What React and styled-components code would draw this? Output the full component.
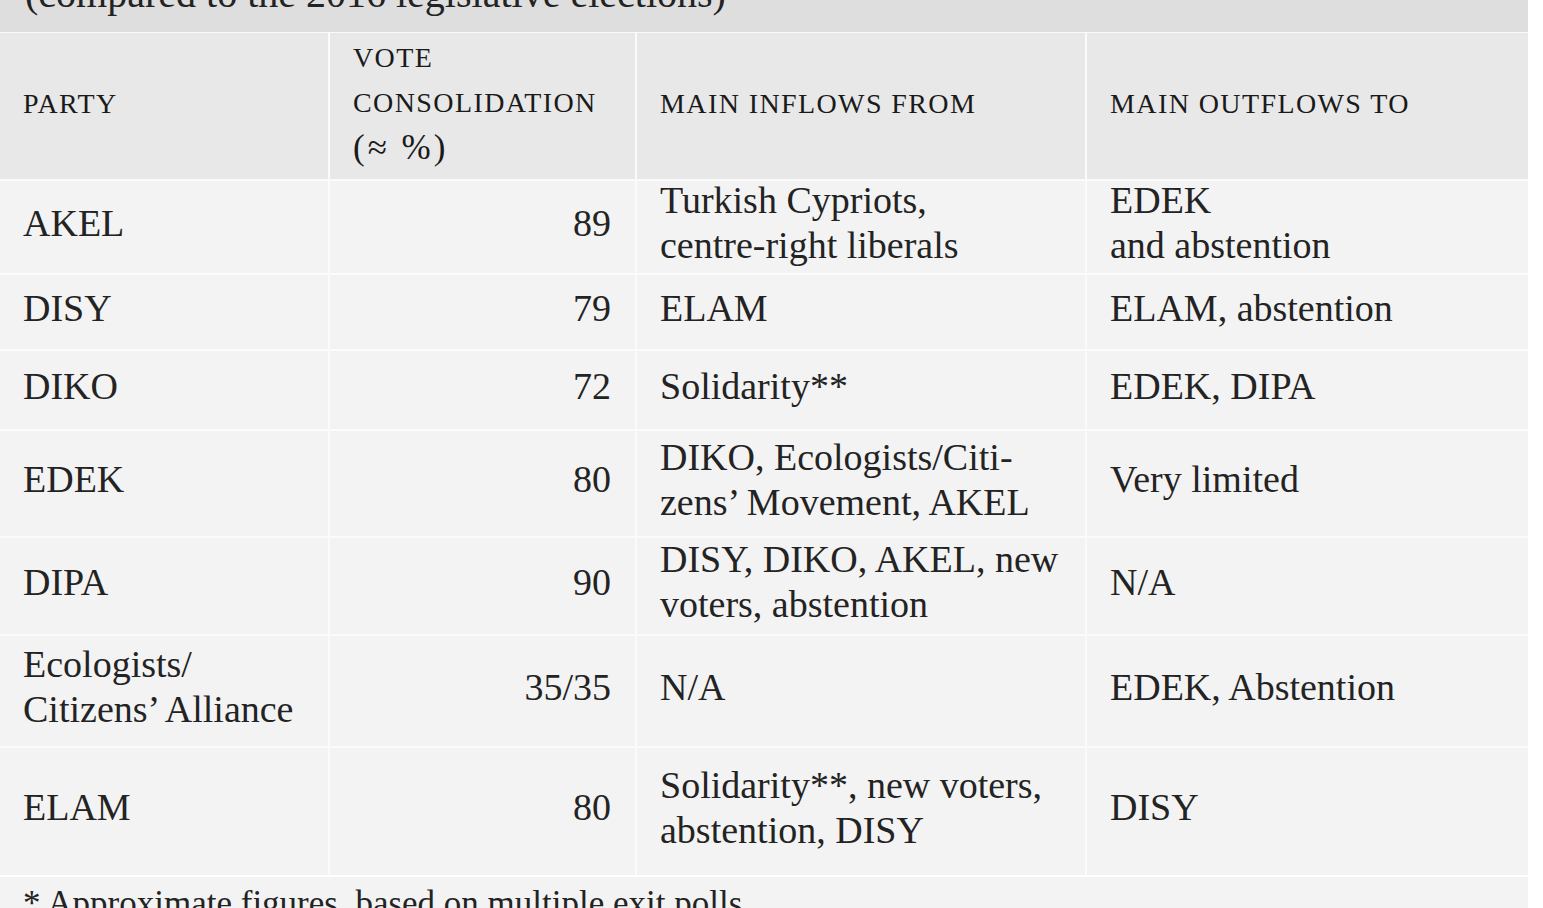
import React from 'react'
import styled, { createGlobalStyle } from 'styled-components'

const GlobalStyle = createGlobalStyle`
  html, body {
    margin: 0;
    padding: 0;
    background: #ffffff;
    overflow: hidden;
  }
  body {
    font-family: 'Liberation Serif', 'Times New Roman', serif;
    color: #232323;
  }
`

const Wrap = styled.div`
  width: 1528px;
`

const Caption = styled.div`
  margin-top: -30px;
  padding: 0 25px 14px;
  background: #dedede;
  font-size: 40px;
  line-height: 48px;
  white-space: nowrap;
`

const Grid = styled.div`
  display: grid;
  grid-template-columns: 328px 305px 448px 441px;
  grid-template-rows: 146px 92px 74px 78px 105px 96px 110px 127px;
  gap: 2px;
  padding-top: 1px;
  background: #fbfbfb;
`

const Head = styled.div`
  display: flex;
  align-items: center;
  padding: 0 20px 6px 23px;
  background: #e8e8e8;
  color: #1a1a1a;
  font-size: 28px;
  line-height: 45px;
  letter-spacing: 1.4px;
  text-transform: uppercase;
  white-space: nowrap;
`

const Unit = styled.span`
  font-size: 35px;
  letter-spacing: 3px;
`

const Cell = styled.div`
  display: flex;
  align-items: center;
  justify-content: ${(p) => (p.$num ? 'flex-end' : 'flex-start')};
  padding: 0 24px 8px 23px;
  background: #f3f3f3;
  font-size: 38px;
  line-height: 45px;
  white-space: nowrap;
`

const Footer = styled.div`
  margin-top: 2px;
  padding: 4px 23px 20px;
  background: #f3f3f3;
  font-size: 35px;
  line-height: 45px;
  white-space: nowrap;
`

const rows = [
  ['AKEL', '89', ['Turkish Cypriots,', 'centre-right liberals'], ['EDEK', 'and abstention']],
  ['DISY', '79', ['ELAM'], ['ELAM, abstention']],
  ['DIKO', '72', ['Solidarity**'], ['EDEK, DIPA']],
  ['EDEK', '80', ['DIKO, Ecologists/Citi-', 'zens\u2019 Movement, AKEL'], ['Very limited']],
  ['DIPA', '90', ['DISY, DIKO, AKEL, new', 'voters, abstention'], ['N/A']],
  [['Ecologists/', 'Citizens\u2019 Alliance'], '35/35', ['N/A'], ['EDEK, Abstention']],
  ['ELAM', '80', ['Solidarity**, new voters,', 'abstention, DISY'], ['DISY']]
]

const Lines = ({ value }) => {
  const list = Array.isArray(value) ? value : [value]
  return (
    <div>
      {list.map((l, i) => (
        <div key={i}>{l}</div>
      ))}
    </div>
  )
}

export default function App() {
  return (
    <>
      <GlobalStyle />
      <Wrap>
        <Caption>(compared to the 2016 legislative elections)</Caption>
        <Grid>
          <Head>Party</Head>
          <Head>
            <Lines value={['Vote', 'Consolidation', <Unit key='u'>{'(\u2248 %)'}</Unit>]} />
          </Head>
          <Head>Main inflows from</Head>
          <Head>Main outflows to</Head>
          {rows.map((r, i) => (
            <React.Fragment key={i}>
              <Cell>
                <Lines value={r[0]} />
              </Cell>
              <Cell $num>{r[1]}</Cell>
              <Cell>
                <Lines value={r[2]} />
              </Cell>
              <Cell>
                <Lines value={r[3]} />
              </Cell>
            </React.Fragment>
          ))}
        </Grid>
        <Footer>* Approximate figures, based on multiple exit polls</Footer>
      </Wrap>
    </>
  )
}
